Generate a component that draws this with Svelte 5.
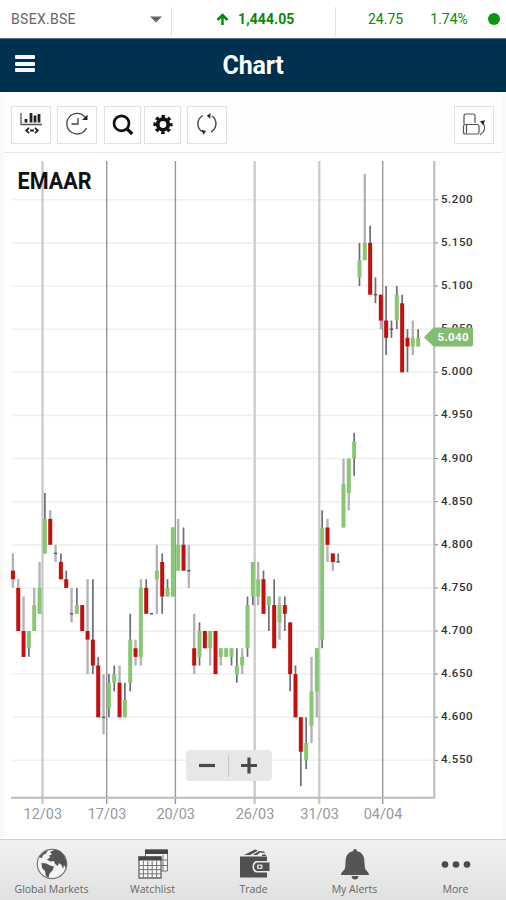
<script lang="ts">
	// open, high, low, close for every session
	const candles = [
		[4.77, 4.79, 4.75, 4.76], [4.75, 4.76, 4.7, 4.7], [4.7, 4.74, 4.67, 4.67], [4.68, 4.7, 4.67, 4.7],
		[4.7, 4.75, 4.7, 4.73], [4.72, 4.78, 4.72, 4.75], [4.79, 4.86, 4.79, 4.83], [4.83, 4.84, 4.8, 4.8],
		[4.79, 4.8, 4.78, 4.79], [4.78, 4.79, 4.76, 4.76], [4.76, 4.77, 4.75, 4.75], [4.72, 4.75, 4.71, 4.72],
		[4.72, 4.75, 4.72, 4.73], [4.73, 4.73, 4.7, 4.7], [4.7, 4.76, 4.65, 4.69], [4.69, 4.76, 4.65, 4.66],
		[4.66, 4.67, 4.6, 4.6], [4.6, 4.65, 4.58, 4.6], [4.61, 4.65, 4.6, 4.64], [4.64, 4.66, 4.63, 4.65],
		[4.64, 4.66, 4.6, 4.6], [4.6, 4.64, 4.6, 4.62], [4.64, 4.72, 4.63, 4.69], [4.68, 4.69, 4.66, 4.67],
		[4.67, 4.76, 4.66, 4.75], [4.75, 4.76, 4.72, 4.72], [4.72, 4.72, 4.72, 4.72], [4.76, 4.8, 4.72, 4.77],
		[4.78, 4.79, 4.72, 4.74], [4.74, 4.76, 4.74, 4.75], [4.74, 4.82, 4.74, 4.82], [4.77, 4.83, 4.77, 4.8],
		[4.8, 4.82, 4.77, 4.77], [4.77, 4.8, 4.75, 4.77], [4.68, 4.72, 4.65, 4.66], [4.67, 4.71, 4.66, 4.7],
		[4.7, 4.7, 4.68, 4.68], [4.68, 4.7, 4.66, 4.7], [4.7, 4.7, 4.65, 4.65], [4.67, 4.68, 4.66, 4.68],
		[4.67, 4.68, 4.67, 4.68], [4.67, 4.68, 4.66, 4.68], [4.65, 4.68, 4.64, 4.66], [4.66, 4.68, 4.65, 4.67],
		[4.68, 4.74, 4.67, 4.73], [4.74, 4.78, 4.73, 4.78], [4.74, 4.78, 4.73, 4.76], [4.76, 4.77, 4.72, 4.72],
		[4.73, 4.74, 4.7, 4.74], [4.73, 4.76, 4.68, 4.68], [4.71, 4.74, 4.69, 4.73], [4.73, 4.74, 4.7, 4.72],
		[4.71, 4.71, 4.63, 4.65], [4.65, 4.66, 4.6, 4.6], [4.6, 4.6, 4.52, 4.56], [4.55, 4.6, 4.54, 4.57],
		[4.59, 4.67, 4.57, 4.63], [4.63, 4.68, 4.6, 4.68], [4.69, 4.84, 4.68, 4.82], [4.82, 4.83, 4.78, 4.8],
		[4.79, 4.79, 4.77, 4.78], [4.78, 4.79, 4.78, 4.78], [4.82, 4.9, 4.82, 4.87], [4.86, 4.9, 4.84, 4.9],
		[4.9, 4.93, 4.88, 4.92], [5.11, 5.15, 5.1, 5.13], [5.13, 5.23, 5.13, 5.15], [5.15, 5.17, 5.09, 5.09],
		[5.09, 5.11, 5.08, 5.09], [5.09, 5.09, 5.05, 5.06], [5.06, 5.1, 5.02, 5.04], [5.05, 5.06, 5.04, 5.05],
		[5.06, 5.1, 5.05, 5.09], [5.08, 5.09, 5.0, 5.0], [5.04, 5.05, 5.0, 5.03], [5.03, 5.06, 5.02, 5.04],
		[5.03, 5.05, 5.03, 5.04]
	];

	const soft = [0, 1, 2, 4, 5, 7, 8, 11, 14, 17, 20, 23, 24, 27, 31, 33, 34, 37, 39, 43, 46, 50, 56, 57, 59, 60, 62, 63, 66, 69, 75];

	const dates = [
		{ label: '12/03', x: 42.5, wide: true },
		{ label: '17/03', x: 106.7, wide: false },
		{ label: '20/03', x: 175.4, wide: false },
		{ label: '26/03', x: 254.7, wide: true },
		{ label: '31/03', x: 319.3, wide: true },
		{ label: '04/04', x: 382.7, wide: false }
	];

	const prices = Array.from({ length: 14 }, (_, i) => 5.2 - i * 0.05);

	const px = (i: number) => 12.9 + i * 5.332;
	const py = (price: number) => 46.8 + (5.2 - price) * 862.4;
</script>

<div class="app">
	<div class="ticker">
		<div class="symbol">
			<span>BSEX.BSE</span>
			<svg width="12" height="7" viewBox="0 0 12 7"><path d="M0 0.5h12L6 6.5z" fill="#666" /></svg>
		</div>
		<div class="price">
			<svg width="13" height="13" viewBox="0 0 13 13" fill="none" stroke="#078a07" stroke-width="2.5"><path d="M6.5 12V2M1.5 7l5-5 5 5" /></svg>
			<b>1,444.05</b>
		</div>
		<div class="change">
			<span>24.75</span>
			<span>1.74%</span>
			<i class="dot"></i>
		</div>
	</div>

	<header>
		<button class="burger" aria-label="Menu"><i></i><i></i><i></i></button>
		<h1>Chart</h1>
	</header>

	<main>
		<div class="toolbar">
			<button aria-label="Chart type">
				<svg width="24" height="26" viewBox="0 0 24 26" fill="none" stroke="#222">
					<path d="M2 2v11.5h21" stroke-width="1.3" stroke="#555" />
					<path d="M7 8v3.500M12 2v9.500M16 4.500v7M20 3v8.500" stroke-width="2.8" />
					<path d="M11 19.500h4M10 16.800l-2.800 2.700 2.800 2.700M16 16.800l2.800 2.700-2.800 2.700" stroke-width="1.800" />
				</svg>
			</button>
			<button aria-label="Period">
				<svg width="26" height="26" viewBox="0 0 26 26" fill="none" stroke="#444" stroke-width="1.3">
					<path d="M21 6A10.300 10.300 0 1 0 22.500 17" />
					<path d="M14 7v6H7.500" />
					<path d="M23.500 3.500v5.500h-5.500z" fill="#222" stroke="none" />
				</svg>
			</button>
			<button class="dark" aria-label="Search">
				<svg width="24" height="24" viewBox="0 0 24 24" fill="none" stroke="#111"><circle cx="10.500" cy="11.300" r="7.500" stroke-width="2.700" /><path d="M15.700 16.600l5.600 5.400" stroke-width="3.300" /></svg>
			</button>
			<button class="gear" aria-label="Settings">
				<svg width="20" height="20" viewBox="0 0 20 20" fill="none" stroke="#111">
					<circle cx="10" cy="10.500" r="5.300" stroke-width="3.800" />
					<circle cx="10" cy="10.500" r="8" stroke-width="3.200" stroke-dasharray="3.350 2.933" stroke-dashoffset="1.675" />
				</svg>
			</button>
			<button class="refresh" aria-label="Refresh">
				<svg width="22" height="24" viewBox="0 0 22 24" fill="none" stroke="#444" stroke-width="1.400">
					<path d="M7 3.500A9.300 9.300 0 0 0 6 19.500M15 19.800A9.300 9.300 0 0 0 16 4" />
					<path d="M14.500 1.500l-3.300 2.200 3 2.800M7.500 22.500l2-3.400-4-.8" fill="#222" stroke="#222" stroke-width="0.600" />
				</svg>
			</button>
			<button class="rotate" aria-label="Rotate">
				<svg width="24" height="24" viewBox="0 0 24 24" fill="none" stroke="#555" stroke-width="1.200">
					<path d="M2 12V4q0-2 2-2h7q2 0 2 2v7" />
					<rect x="1.500" y="12.500" width="15.500" height="9.500" rx="1.800" />
					<path d="M4.500 13v8.500M18 23q8-6 2.500-12.500" />
					<path d="M23 8.300l-5 1 3.200 3.700z" fill="#222" stroke="none" />
				</svg>
			</button>
		</div>

		<div class="chart">
			<svg width="498" height="686" viewBox="4 0 498 686">
				{#each prices as price}
					<line x1="13" x2="434" y1={py(price)} y2={py(price)} stroke="#efefef" stroke-width="1.5" />
				{/each}
				{#each dates as d}
					<line x1={d.x} x2={d.x} y1="8" y2="651" stroke={d.wide ? '#c8c8c8' : '#989898'} stroke-width={d.wide ? 2.2 : 1.4} />
					<text class="date" x={d.x + 0.3} y="666" text-anchor="middle">{d.label}</text>
				{/each}
				<path d="M434.3 8V644.8H11" fill="none" stroke="#bcbcbc" stroke-width="2" />

				{#each candles as [open, high, low, close], i}
					<line x1={px(i)} x2={px(i)} y1={py(high)} y2={py(low)} stroke={soft.includes(i) ? '#b4b4b4' : '#6b6f73'} stroke-width={soft.includes(i) ? 2.4 : 1.7} />
					{#if open === close}
						<rect x={px(i) - 1.7} y={py(open) - 0.7} width="3.4" height="1.4" fill="#555" />
					{:else}
						<rect x={px(i) - 2} y={py(Math.max(open, close))} width="4" height={py(Math.min(open, close)) - py(Math.max(open, close))} fill={close > open ? '#89c777' : '#c3100e'} />
					{/if}
				{/each}

				{#each prices as price}
					<line x1="435" x2="438" y1={py(price)} y2={py(price)} stroke="#888" />
					<text class="value" x="441" y={py(price) + 3} textLength="31.5">{price.toFixed(3)}</text>
				{/each}
				<path d="M424 184.300l9.500-9.800h37.500q2 0 2 2v15q0 2-2 2h-37.500z" fill="#82bd70" />
				<text class="value last" x="437.5" y="188" textLength="31">5.040</text>
				<text class="name" x="17.5" y="35.5" textLength="74" lengthAdjust="spacingAndGlyphs">EMAAR</text>
			</svg>
			<div class="zoom">
				<button aria-label="Zoom out"><svg width="18" height="18" viewBox="0 0 18 18"><path d="M1 8.500h16" stroke="#4a4a4a" stroke-width="3.2" /></svg></button>
				<button aria-label="Zoom in"><svg width="18" height="18" viewBox="0 0 18 18"><path d="M1 8.500h16M9 0.500v16" stroke="#4a4a4a" stroke-width="3.2" /></svg></button>
			</div>
		</div>
	</main>

	<nav>
		<a href="#markets">
			<svg width="32" height="32" viewBox="0 0 32 32">
				<circle cx="16" cy="16" r="14.7" fill="#f4f4f4" stroke="#777" stroke-width="1.2" />
				<path d="M14 4l5-2.5 5 1.500 4.500 5 2 6-.5 6-2-3-1 4-1.500-4-2.500-2-1 3-3-2-1-3-4 .5-3-2 3-2-1-2 3-1zM3 9l5-5 4-1.500-2 3-3 1.500-1 3zM5.500 15l5 .5 3.500 2 4 1-1.500 4-3 3-1 4.500-2.500-2-1-5-3-3z" fill="#555" />
			</svg>
			<span>Global Markets</span>
		</a>
		<a href="#watchlist">
			<svg width="32" height="32" viewBox="0 0 32 32" fill="none" stroke="#777">
				<path d="M8.500 2h22v21h-22z" fill="#f3f3f3" />
				<path d="M26 7v16M9 12h21M9 17.500h21" />
				<path d="M8 1.500h23V6H8z" fill="#444" stroke="none" />
				<path d="M2 9h22v21H2z" fill="#f6f6f6" stroke="#666" stroke-width="1.3" />
				<path d="M6.400 13v17M10.800 13v17M15.200 13v17M19.600 13v17M2 17.500h22M2 21.600h22M2 25.800h22" />
				<path d="M1.500 8.500h23v4h-23z" fill="#444" stroke="none" />
			</svg>
			<span>Watchlist</span>
		</a>
		<a href="#trade">
			<svg width="32" height="32" viewBox="0 0 32 32" fill="#505050">
				<path d="M6 7L17 1.500l3 1-8 4.500zM15 7l6-4 5 .5 1 1.500-5-.5-3 2.500zM24 6.500h4v1.500h-4z" />
				<path d="M2 8.500h27v21H2z" />
				<path d="M18 13h13v11.500H18q-3.500-1-3.500-5.700T18 13z" fill="#e8e8e8" />
				<path d="M19 14.500h12.500v8.500H19q-3-1-3-4.200t3-4.300z" />
				<rect x="19" y="16.500" width="5.500" height="4.500" rx="1" fill="#ddd" /><circle cx="21.700" cy="18.700" r="1.200" />
			</svg>
			<span>Trade</span>
		</a>
		<a href="#alerts">
			<svg width="32" height="32" viewBox="0 0 32 32" fill="#555">
				<circle cx="16" cy="3" r="2" />
				<path d="M16 3c6 0 9 4 9.300 9l.5 7c.3 4 4.200 4.500 4.200 8H2c0-3.500 3.900-4 4.200-8l.5-7C7 7 10 3 16 3zM12.500 28h7q-.5 3.500-3.500 3.500T12.500 28z" />
			</svg>
			<span>My Alerts</span>
		</a>
		<a href="#more">
			<svg width="32" height="32" viewBox="0 0 32 32" fill="#4b4b4b"><circle cx="5" cy="16.5" r="3.3" /><circle cx="16" cy="16.5" r="3.3" /><circle cx="27" cy="16.5" r="3.3" /></svg>
			<span>More</span>
		</a>
	</nav>
</div>

<style>
	.app {
		width: 506px;
		height: 900px;
		display: flex;
		flex-direction: column;
		font-family: Roboto, sans-serif;
		background: #fff;
		overflow: hidden;
	}

	button {
		padding: 0;
		border: none;
		background: none;
		display: flex;
		align-items: center;
		justify-content: center;
	}

	.ticker {
		height: 38px;
		flex: none;
		display: grid;
		grid-template-columns: 172px 164px 1fr;
		font-size: 14px;
		color: #078a07;
	}

	.ticker > div {
		display: flex;
		align-items: center;
		box-sizing: border-box;
	}

	.symbol {
		justify-content: space-between;
		padding: 0 10px 0 11px;
		color: #666;
		letter-spacing: 0.3px;
	}

	.price {
		gap: 9px;
		padding-left: 44px;
		letter-spacing: 0.1px;
	}

	.symbol,
	.price {
		background: linear-gradient(#e2e2e2, #e2e2e2) right 7px / 1px 30px no-repeat;
	}

	.change {
		padding: 0 6px 0 32px;
		justify-content: space-between;
	}

	.change span:nth-child(2) {
		margin-left: 7px;
	}

	.dot {
		width: 12px;
		height: 12px;
		border-radius: 50%;
		background: #0b970b;
	}

	header {
		height: 54px;
		flex: none;
		display: grid;
		grid-template-columns: 50px 1fr 50px;
		align-items: center;
		background: #00304f;
		box-sizing: border-box;
		border-top: 1px solid #5f7180;
	}

	.burger {
		flex-direction: column;
		gap: 2.5px;
		padding-bottom: 4px;
	}

	.burger i {
		width: 20px;
		height: 4px;
		border-radius: 1px;
		background: #f4f7fa;
	}

	h1 {
		margin: 0;
		text-align: center;
		font-size: 25px;
		font-weight: 700;
		color: #fff;
		letter-spacing: -0.2px;
	}

	main {
		height: 747px;
		flex: none;
		box-sizing: border-box;
		padding: 0 4px;
		background: #fafafa;
	}

	.toolbar {
		height: 61px;
		box-sizing: border-box;
		display: flex;
		align-items: center;
		padding: 5px 8px 0 7px;
		background: #fdfdfd;
		border-bottom: 1px solid #e6e6e6;
	}

	.toolbar button {
		width: 40px;
		height: 38px;
		box-sizing: border-box;
		border: 1px solid #e2e2e2;
		background: #fff;
		margin-right: 6px;
		padding-bottom: 2px;
	}

	.toolbar .dark {
		width: 37px;
		margin: 0 3px 0 1px;
	}

	.toolbar .gear {
		width: 37px;
	}

	.toolbar .rotate {
		margin: 0 0 0 auto;
	}

	.chart {
		position: relative;
		height: 686px;
		background: #fff;
	}

	.chart > svg {
		display: block;
	}

	.date {
		font-size: 14.5px;
		fill: #999;
	}

	.value {
		font-size: 11.5px;
		font-weight: 500;
		fill: #333;
	}

	.last {
		font-weight: 700;
		fill: #fff;
	}

	.name {
		font-size: 24px;
		font-weight: 700;
		fill: #111;
	}

	.zoom {
		position: absolute;
		left: 182px;
		top: 597px;
		width: 86px;
		height: 31px;
		display: flex;
		align-items: center;
		border-radius: 4px;
		background: #e7e7e7;
	}

	.zoom button {
		flex: 1;
		height: 22px;
		padding-left: 1px;
	}

	.zoom button + button {
		border-left: 1px solid #c6c6c6;
		padding: 0 3px 0 0;
	}

	nav {
		flex: 1;
		display: grid;
		grid-template-columns: repeat(5, 1fr);
		border-top: 1px solid #cfcfcf;
		background: linear-gradient(#f1f1f1, #e1e1e1);
		padding-left: 1px;
	}

	nav a {
		display: flex;
		flex-direction: column;
		align-items: center;
		padding-top: 8px;
		gap: 3px;
		font: 10.5px/13px 'Open Sans', sans-serif;
		color: #666;
		text-decoration: none;
	}
</style>
